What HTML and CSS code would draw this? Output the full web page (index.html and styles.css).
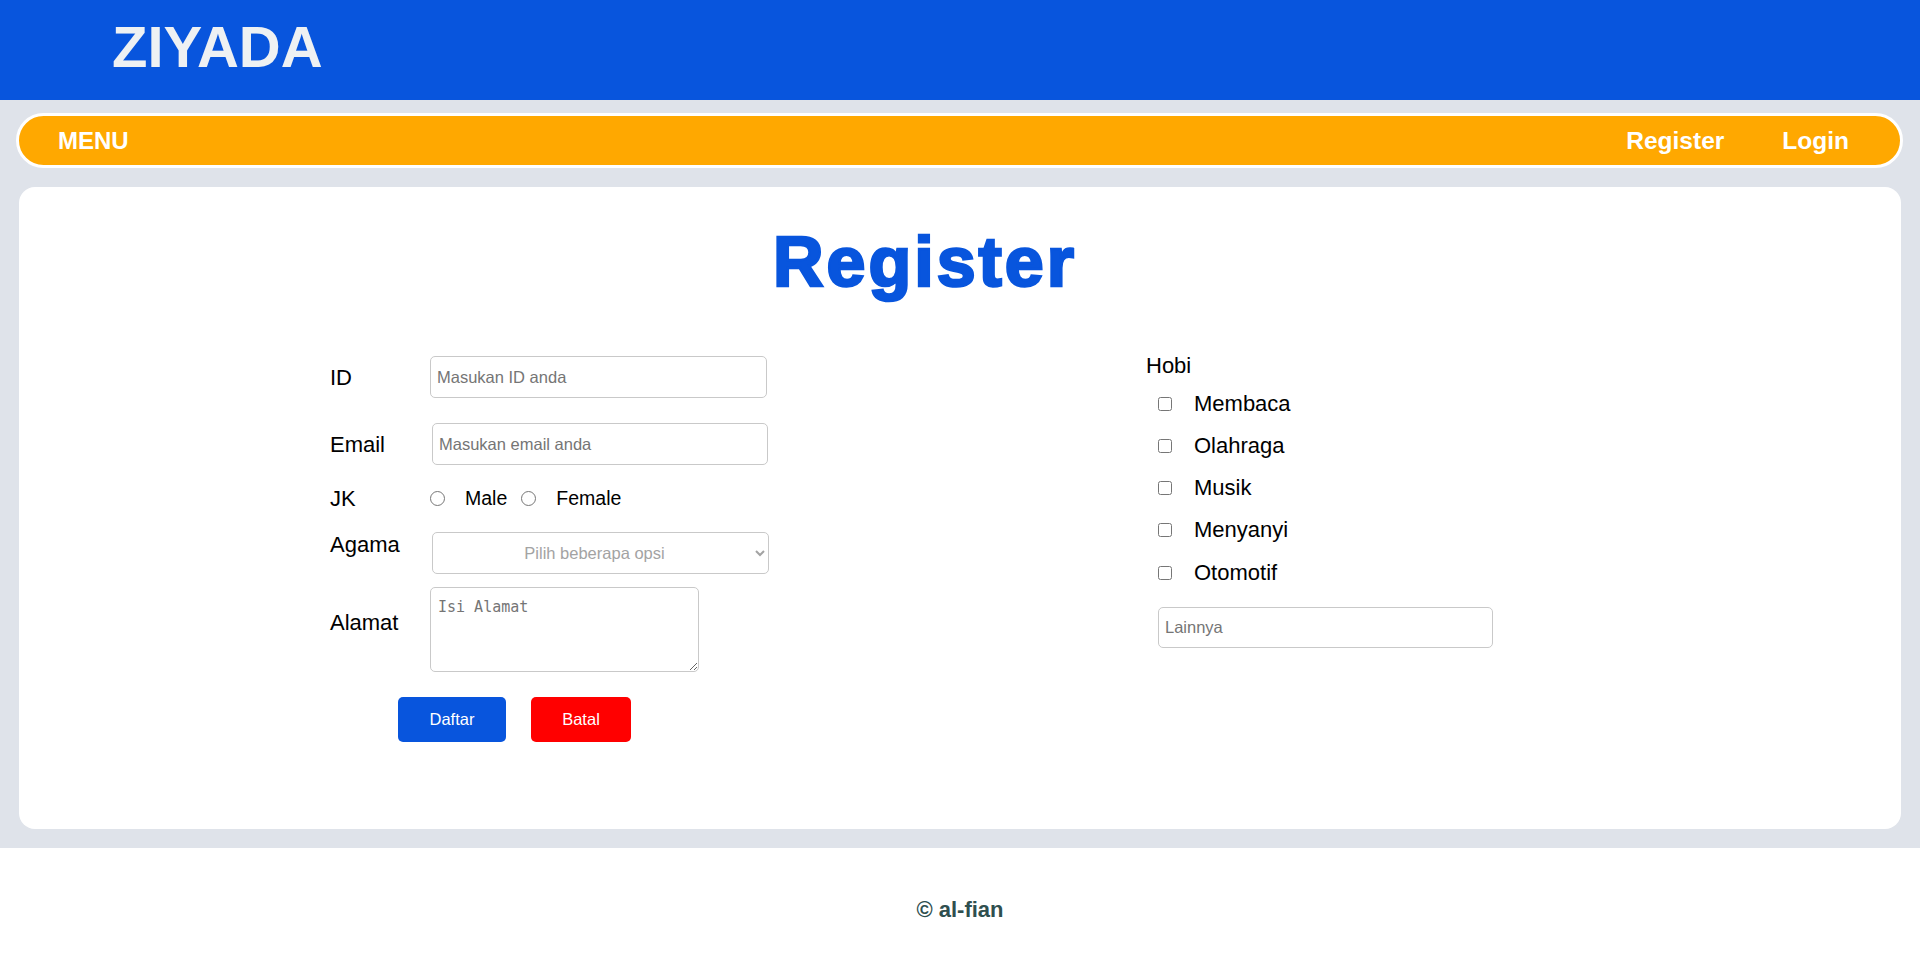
FILE: index.html
```html
<!DOCTYPE html>
<html lang="id">
<head>
<meta charset="utf-8">
<title>ZIYADA - Register</title>
<link rel="stylesheet" href="styles.css">
</head>
<body>
<header class="topbar">
  <h1 class="brand">ZIYADA</h1>
</header>
<div class="page">
  <nav class="nav">
    <span class="nav-menu">MENU</span>
    <div class="nav-links">
      <a class="nav-link" href="#">Register</a>
      <a class="nav-link" href="#">Login</a>
    </div>
  </nav>
  <main class="card">
    <h2 class="title">Register</h2>
    <form class="form">
      <div class="col-left">
        <div class="row">
          <label class="label" for="id">ID</label>
          <input class="field field-id" id="id" type="text" placeholder="Masukan ID anda">
        </div>
        <div class="row row-email">
          <label class="label" for="email">Email</label>
          <input class="field field-email" id="email" type="email" placeholder="Masukan email anda">
        </div>
        <div class="row row-jk">
          <span class="label">JK</span>
          <input class="radio" type="radio" name="jk" id="male">
          <label class="opt opt-male" for="male">Male</label>
          <input class="radio" type="radio" name="jk" id="female">
          <label class="opt" for="female">Female</label>
        </div>
        <div class="row row-agama">
          <label class="label" for="agama">Agama</label>
          <select class="field field-select" id="agama">
            <option>Pilih beberapa opsi</option>
          </select>
        </div>
        <div class="row row-alamat">
          <label class="label label-alamat" for="alamat">Alamat</label>
          <textarea class="field field-area" id="alamat" placeholder="Isi Alamat"></textarea>
        </div>
        <div class="actions">
          <button class="btn btn-primary" type="submit">Daftar</button>
          <button class="btn btn-danger" type="reset">Batal</button>
        </div>
      </div>
      <div class="col-right">
        <div class="hobi-title">Hobi</div>
        <div class="checks">
          <label class="check-row"><input class="check" type="checkbox">Membaca</label>
          <label class="check-row"><input class="check" type="checkbox">Olahraga</label>
          <label class="check-row"><input class="check" type="checkbox">Musik</label>
          <label class="check-row"><input class="check" type="checkbox">Menyanyi</label>
          <label class="check-row"><input class="check" type="checkbox">Otomotif</label>
        </div>
        <input class="field field-other" type="text" placeholder="Lainnya">
      </div>
    </form>
  </main>
</div>
<footer class="footer">© al-fian</footer>
</body>
</html>
```
FILE: styles.css
```css
* {
  box-sizing: border-box;
}

body {
  margin: 0;
  font-family: "Liberation Sans", Arial, sans-serif;
  background: #ffffff;
  color: #000000;
}

/* header */
.topbar {
  height: 100px;
  background: #0855dd;
  padding: 18px 0 0 112px;
}

.brand {
  margin: 0;
  font-size: 58px;
  line-height: 58px;
  font-weight: 700;
  color: #eef1f3;
}

/* grey page area */
.page {
  background: #dfe3ea;
  padding: 13px 17px 19px 16px;
}

.nav {
  height: 55px;
  background: #ffa800;
  border: 3px solid #ffffff;
  border-radius: 28px;
  display: flex;
  align-items: center;
  padding: 0 51px 0 39px;
}

.nav-menu {
  font-size: 24px;
  font-weight: 700;
  color: #ffffff;
}

.nav-links {
  margin-left: auto;
  display: flex;
  gap: 58px;
}

.nav-link {
  font-size: 24.5px;
  font-weight: 700;
  color: #ffffff;
  text-decoration: none;
}

/* card */
.card {
  display: block;
  margin: 19px 2px 0 3px;
  height: 642px;
  background: #ffffff;
  border-radius: 16px;
  padding-top: 35px;
}

.title {
  margin: 0;
  padding-right: 70px;
  text-align: center;
  font-size: 70px;
  line-height: 80px;
  font-weight: 700;
  letter-spacing: 3px;
  color: #0855dd;
  -webkit-text-stroke: 2.6px #0855dd;
}

.form {
  display: flex;
  margin-top: 50.5px;
  padding-left: 311px;
}

.col-left {
  width: 816px;
  padding-top: 3.5px;
  display: flex;
  flex-direction: column;
}

.row {
  display: flex;
  align-items: center;
}

.row-email {
  margin-top: 25px;
}

.row-jk {
  margin-top: 20.5px;
}

.row-agama {
  margin-top: 21.5px;
  align-items: flex-start;
}

.row-alamat {
  margin-top: 13px;
  align-items: flex-start;
}

.label {
  width: 100px;
  flex: none;
  font-size: 22px;
  line-height: 25px;
}

.label-alamat {
  margin-top: 23px;
}

.opt {
  font-size: 19.5px;
  line-height: 25px;
}

.opt-male {
  margin-right: 14px;
}

.radio {
  width: 15px;
  height: 15px;
  margin: 0 20px 0 0;
}

.field {
  height: 42px;
  border: 1px solid #c9c9c9;
  border-radius: 5px;
  background: #ffffff;
  font-family: "Liberation Sans", Arial, sans-serif;
  font-size: 16.5px;
  color: #000000;
  padding: 0 6px;
}

.field::placeholder {
  color: #757575;
}

.field-id {
  width: 337px;
}

.field-email {
  width: 336px;
  margin-left: 2px;
}

.field-select {
  width: 337px;
  margin-left: 2px;
  text-align: center;
  text-align-last: center;
  color: #a3a3a3;
}

.field-area {
  width: 269px;
  height: 85px;
  padding: 10px 7px;
  font-family: "DejaVu Sans Mono", "Liberation Mono", monospace;
  font-size: 15px;
  resize: both;
}

.actions {
  display: flex;
  gap: 25px;
  margin-top: 25px;
  padding-left: 68px;
}

.btn {
  height: 45px;
  border: 0;
  border-radius: 5px;
  color: #ffffff;
  font-family: "Liberation Sans", Arial, sans-serif;
  font-size: 16.5px;
}

.btn-primary {
  width: 108px;
  background: #0855dd;
}

.btn-danger {
  width: 100px;
  background: #ff0000;
}

/* right column */
.col-right {
  display: flex;
  flex-direction: column;
  align-items: flex-start;
}

.hobi-title {
  font-size: 22px;
  line-height: 25px;
}

.checks {
  display: flex;
  flex-direction: column;
  margin: 5px 0 0 12px;
}

.check-row {
  height: 42.25px;
  display: flex;
  align-items: center;
  font-size: 22px;
}

.check {
  width: 14px;
  height: 14px;
  margin: 0 22px 0 0;
}

.field-other {
  width: 335px;
  height: 41px;
  margin: 13.25px 0 0 12px;
}

/* footer */
.footer {
  height: 125px;
  padding-top: 49px;
  text-align: center;
  font-size: 22px;
  line-height: 25px;
  font-weight: 700;
  color: #2f4f4f;
}
```
